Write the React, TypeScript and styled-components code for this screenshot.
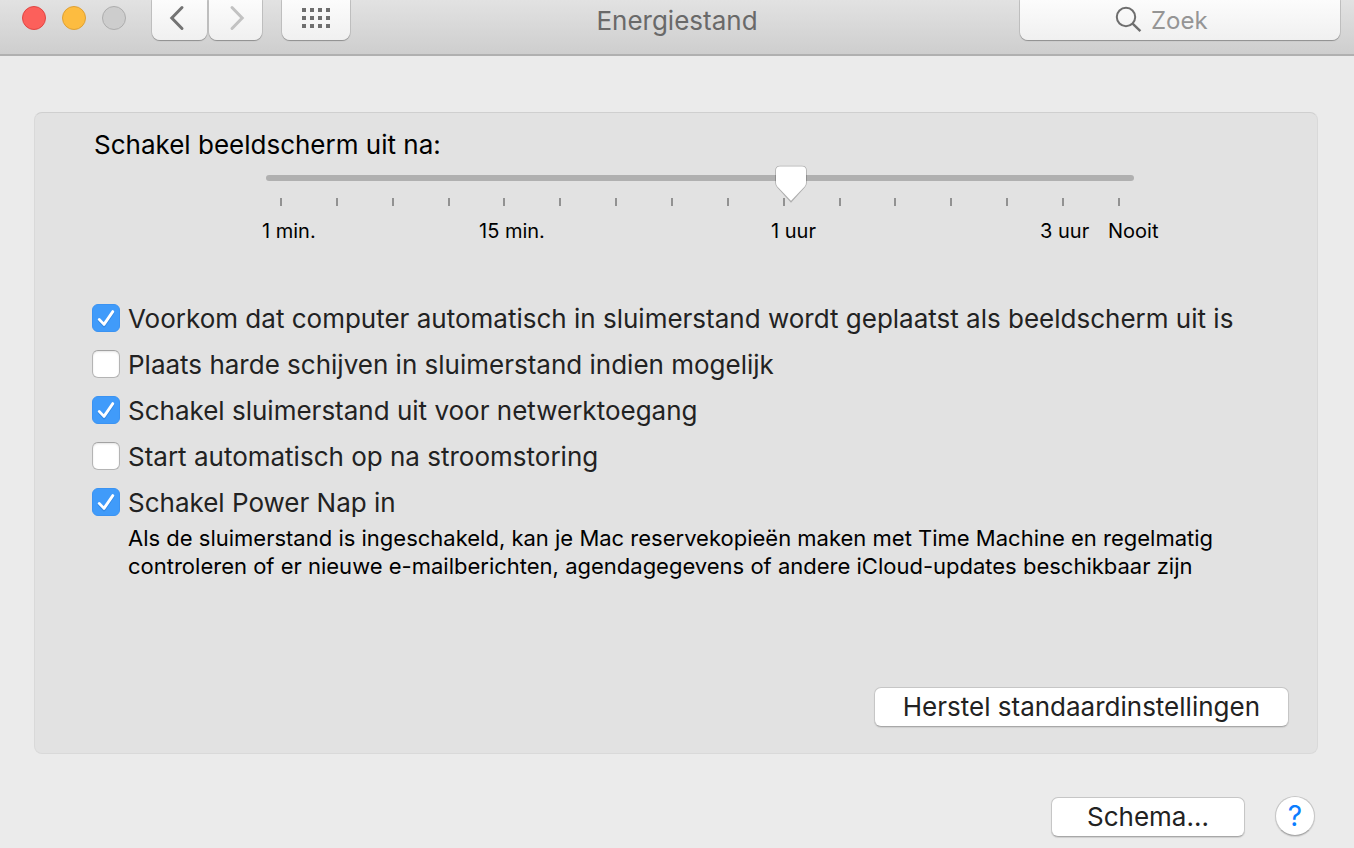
import React, { useState } from "react";
import styled, { createGlobalStyle } from "styled-components";

const checkMark =
  "url(\"data:image/svg+xml,%3Csvg xmlns='http://www.w3.org/2000/svg' viewBox='0 0 28 28'%3E%3Cpath d='M7.2 15.6L12 20.8L20.8 8' transform='translate(0 1)' fill='none' stroke='%232678cf' stroke-opacity='.5' stroke-width='3' stroke-linecap='round' stroke-linejoin='round'/%3E%3Cpath d='M7.2 15.4L12 20.4L20.8 7.6' fill='none' stroke='white' stroke-width='2.8' stroke-linecap='round' stroke-linejoin='round'/%3E%3C/svg%3E\")";

const sliderThumb =
  "url(\"data:image/svg+xml,%3Csvg xmlns='http://www.w3.org/2000/svg' viewBox='0 0 34 38'%3E%3Cpath d='M6 1.5H28Q32 1.5 32 5.5V17.5Q32 20 30.4 21.8L17 36.6L3.6 21.8Q2 20 2 17.5V5.5Q2 1.5 6 1.5Z' fill='white' stroke='%23000' stroke-opacity='.24' stroke-width='1.6'/%3E%3Cpath d='M6 1.5H28Q32 1.5 32 5.5V17.5Q32 20 30.4 21.8L17 35.6L3.6 21.8Q2 20 2 17.5V5.5Q2 1.5 6 1.5Z' fill='white'/%3E%3C/svg%3E\")";

const GlobalStyle = createGlobalStyle`
  *, *::before, *::after { box-sizing: border-box; }
  body {
    margin: 0;
    background: #ebebeb;
    color: #222;
    font-family: Inter, "Liberation Sans", sans-serif;
    font-size: 26px;
    line-height: 32px;
  }
  button, input { font: inherit; color: inherit; margin: 0; padding: 0; }
`;

const Toolbar = styled.header`
  display: grid;
  grid-template-columns: 1fr auto 1fr;
  align-items: start;
  height: 56px;
  padding: 0 14px;
  background: linear-gradient(#e2e2e2, #cecece);
  border-bottom: 2px solid #b0b0b0;
`;

const ToolbarStart = styled.div`
  display: flex;
  padding-left: 8px;
`;

const WindowControls = styled.div`
  display: flex;
  gap: 16px;
  padding-top: 6px;
  margin-right: 26px;
`;

const WindowControl = styled.button<{ $fill: string; $edge: string }>`
  width: 24px;
  height: 24px;
  border: 1px solid ${(p) => p.$edge};
  border-radius: 50%;
  background: ${(p) => p.$fill};
`;

const ToolButton = styled.button<{ $width: number; $gap?: number }>`
  display: flex;
  justify-content: center;
  width: ${(p) => p.$width}px;
  height: 40px;
  margin-right: ${(p) => p.$gap ?? 0}px;
  border: 0;
  border-radius: 0 0 8px 8px;
  background: linear-gradient(#fcfcfc, #f0f0f0);
  box-shadow: 0 1px 1px #8f8f8f, 0 0 0 1px #c4c4c4;
`;

const Title = styled.h1`
  margin: 0;
  padding-top: 5px;
  font-size: 26px;
  font-weight: 400;
  color: #696969;
`;

const SearchField = styled.label`
  display: flex;
  justify-self: end;
  gap: 9px;
  width: 320px;
  max-width: 100%;
  height: 40px;
  padding-left: 95px;
  border-radius: 0 0 8px 8px;
  background: linear-gradient(#fcfcfc, #f0f0f0);
  box-shadow: 0 1px 1px #8f8f8f, 0 0 0 1px #c4c4c4;
`;

const SearchInput = styled.input`
  flex: 1;
  min-width: 0;
  height: 40px;
  border: 0;
  outline: 0;
  background: transparent;
  font-size: 24px;
  &::placeholder { color: #959595; opacity: 1; }
`;

const Main = styled.main`
  padding: 56px 36px 0 34px;
`;

const Panel = styled.section`
  padding: 16px 28px 26px 57px;
  border: 1px solid #d9d9d9;
  border-top-color: #cfcfcf;
  border-radius: 8px;
  background: #e2e2e2;
`;

const SliderLabel = styled.label`
  display: block;
  padding-left: 2px;
  color: #000;
`;

const SliderBlock = styled.div`
  padding: 5px 155px 0 174px;
`;

const Slider = styled.input`
  display: block;
  position: relative;
  z-index: 1;
  width: 100%;
  height: 24px;
  appearance: none;
  background: transparent;
  &::-webkit-slider-runnable-track {
    height: 6px;
    border-radius: 3px;
    background: #b0b0b0;
  }
  &::-webkit-slider-thumb {
    appearance: none;
    width: 34px;
    height: 38px;
    margin-top: -10px;
    background: ${sliderThumb} center / 34px 38px no-repeat;
  }
`;

const Ticks = styled.div`
  display: flex;
  justify-content: space-between;
  padding: 0 14px;
  margin-top: 8px;
`;

const Tick = styled.span`
  width: 2px;
  height: 8px;
  background: #929292;
`;

const TickLabels = styled.div`
  display: grid;
  grid-template-columns: 217fr 292fr 269fr 68fr 52fr;
  margin: 11px -26px 0 -4px;
  font-size: 20px;
  line-height: 28px;
  color: #000;
  white-space: nowrap;
`;

const Options = styled.div`
  display: flex;
  flex-direction: column;
  gap: 18px;
  margin-top: 59px;
`;

const Option = styled.label`
  display: flex;
  align-items: center;
  gap: 8px;
  height: 28px;
  white-space: nowrap;
`;

const OptionText = styled.span`
  padding-top: 2px;
`;

const Checkbox = styled.input`
  flex: none;
  width: 28px;
  height: 28px;
  appearance: none;
  border: 1px solid #b4b4b4;
  border-top-color: #a2a2a2;
  border-radius: 6px;
  background: #fff;
  box-shadow: inset 0 1px 2px #e4e4e4;
  &:checked {
    border-color: #3b93f2;
    background: #409bfa ${checkMark} center / 28px 28px no-repeat;
    box-shadow: none;
  }
`;

const Description = styled.p`
  max-width: 1150px;
  margin: 8px 0 0;
  padding-left: 36px;
  font-size: 22px;
  line-height: 28px;
  color: #000;
`;

const PanelActions = styled.div`
  display: flex;
  justify-content: flex-end;
  margin-top: 107px;
`;

const PushButton = styled.button`
  height: 40px;
  padding: 0 28px;
  border: 1px solid #c6c6c6;
  border-bottom-color: #a8a8a8;
  border-radius: 7px;
  background: #fff;
  box-shadow: 0 1px 1px #cfcfcf;
`;

const Footer = styled.footer`
  display: flex;
  justify-content: flex-end;
  align-items: baseline;
  gap: 30px;
  padding: 42px 3px 10px 0;
`;

const ScheduleButton = styled(PushButton)`
  width: 194px;
`;

const HelpButton = styled.button`
  width: 40px;
  height: 40px;
  border: 1px solid #c6c6c6;
  border-bottom-color: #a8a8a8;
  border-radius: 50%;
  background: #fff;
  box-shadow: 0 1px 1px #cfcfcf;
  font-size: 28px;
  color: #0a7dff;
`;

const initialOptions = [
  { id: "sleep", on: true, text: "Voorkom dat computer automatisch in sluimerstand wordt geplaatst als beeldscherm uit is" },
  { id: "disks", on: false, text: "Plaats harde schijven in sluimerstand indien mogelijk" },
  { id: "network", on: true, text: "Schakel sluimerstand uit voor netwerktoegang" },
  { id: "restart", on: false, text: "Start automatisch op na stroomstoring" },
  { id: "nap", on: true, text: "Schakel Power Nap in" },
];

const tickLabels = ["1 min.", "15 min.", "1 uur", "3 uur", "Nooit"];

export default function App() {
  const [options, setOptions] = useState(initialOptions);
  const toggle = (id: string) =>
    setOptions((list) => list.map((o) => (o.id === id ? { ...o, on: !o.on } : o)));

  return (
    <>
      <GlobalStyle />
      <Toolbar>
        <ToolbarStart>
          <WindowControls>
            <WindowControl $fill="#fc605b" $edge="#e04643" aria-label="Sluit" />
            <WindowControl $fill="#fdbc40" $edge="#dea035" aria-label="Minimaliseer" />
            <WindowControl $fill="#cdcdcd" $edge="#adadad" aria-label="Zoom" disabled />
          </WindowControls>
          <ToolButton $width={55} $gap={2} aria-label="Vorige">
            <svg width="55" height="40" fill="none" stroke="#737373" strokeWidth="3" strokeLinecap="round">
              <path d="M30 7.5L19.8 18L30 28.5" />
            </svg>
          </ToolButton>
          <ToolButton $width={53} $gap={20} aria-label="Volgende" disabled>
            <svg width="53" height="40" fill="none" stroke="#c2c2c2" strokeWidth="3" strokeLinecap="round">
              <path d="M23 7.5L33.2 18L23 28.5" />
            </svg>
          </ToolButton>
          <ToolButton $width={68} aria-label="Toon alles">
            <svg width="68" height="40" fill="#6e6e6e">
              {[8, 16, 24].map((y) =>
                [20, 28, 36, 44].map((x) => <rect key={`${x}-${y}`} x={x} y={y} width="4" height="4" />)
              )}
            </svg>
          </ToolButton>
        </ToolbarStart>
        <Title>Energiestand</Title>
        <SearchField>
          <svg width="27" height="40" fill="none" stroke="#6e6e6e" strokeWidth="2">
            <circle cx="11" cy="17" r="9.2" />
            <path d="M17.6 23.6L25.4 31.2" strokeWidth="2.4" />
          </svg>
          <SearchInput type="text" placeholder="Zoek" aria-label="Zoek" />
        </SearchField>
      </Toolbar>
      <Main>
        <Panel>
          <SliderLabel htmlFor="display-off">Schakel beeldscherm uit na:</SliderLabel>
          <SliderBlock>
            <Slider id="display-off" type="range" min={0} max={1000} defaultValue={609} />
            <Ticks>
              {Array.from({ length: 16 }, (_, i) => (
                <Tick key={i} />
              ))}
            </Ticks>
            <TickLabels>
              {tickLabels.map((t) => (
                <span key={t}>{t}</span>
              ))}
            </TickLabels>
          </SliderBlock>
          <Options>
            {options.map((o) => (
              <Option key={o.id}>
                <Checkbox type="checkbox" checked={o.on} onChange={() => toggle(o.id)} />
                <OptionText>{o.text}</OptionText>
              </Option>
            ))}
          </Options>
          <Description>
            Als de sluimerstand is ingeschakeld, kan je Mac reservekopieën maken met Time Machine en regelmatig
            controleren of er nieuwe e-mailberichten, agendagegevens of andere iCloud-updates beschikbaar zijn
          </Description>
          <PanelActions>
            <PushButton>Herstel standaardinstellingen</PushButton>
          </PanelActions>
        </Panel>
        <Footer>
          <ScheduleButton>Schema...</ScheduleButton>
          <HelpButton aria-label="Help">?</HelpButton>
        </Footer>
      </Main>
    </>
  );
}
